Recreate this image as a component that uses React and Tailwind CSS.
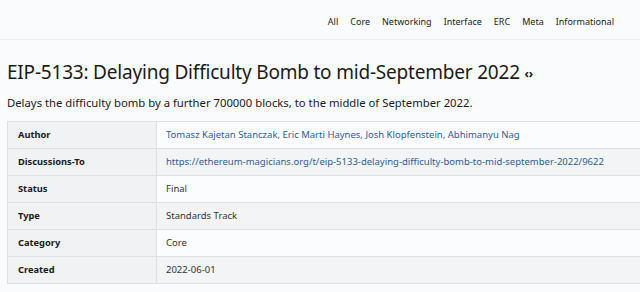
export default function App() {
  const rows = [
    ["Author", "Tomasz Kajetan Stanczak, Eric Marti Haynes, Josh Klopfenstein, Abhimanyu Nag", true],
    ["Discussions-To", "https://ethereum-magicians.org/t/eip-5133-delaying-difficulty-bomb-to-mid-september-2022/9622", true],
    ["Status", "Final", false],
    ["Type", "Standards Track", false],
    ["Category", "Core", false],
    ["Created", "2022-06-01", false],
  ];
  const nav = ["All", "Core", "Networking", "Interface", "ERC", "Meta", "Informational"];
  return (
    <div className="w-[640px] h-[292px] overflow-hidden bg-[#fafbfd] text-[#212529]" style={{ fontFamily: '"Noto Sans", "Open Sans", sans-serif' }}>
      <div className="h-[40px] border-b border-[#eceef1] flex items-center justify-end pt-[5px] pr-[26px] gap-[12px] text-[9px] text-[#222]">
        {nav.map((n) => (
          <span key={n}>{n}</span>
        ))}
      </div>
      <div className="pl-[7px]">
        <h1 className="mt-[19px] text-[19px] leading-[26px] text-[#1a1a1a] tracking-[-0.2px]">
          EIP-5133: Delaying Difficulty Bomb to mid-September 2022 <span className="text-[12px] font-bold align-[1px]">‹›</span>
        </h1>
        <p className="mt-[8px] text-[11.3px] leading-[16px] text-[#1a1a1a]">
          Delays the difficulty bomb by a further 700000 blocks, to the middle of September 2022.
        </p>
        <table className="mt-[10px] w-[650px] border-collapse text-[9.5px]">
          <tbody>
            {rows.map(([k, v, link], i) => (
              <tr key={k} className="h-[27px]">
                <th className="w-[149px] text-left font-bold pl-[10px] bg-[#f1f2f4] border border-[#dcdfe3] text-[#1a1a1a] text-[9.3px]">{k}</th>
                <td className={`pl-[9px] border border-[#dcdfe3] ${i % 2 === 1 ? "bg-[#f3f4f6]" : "bg-[#fbfcfe]"} ${link ? "text-[#2d5d9c]" : "text-[#333]"}`}>
                  {v}
                </td>
              </tr>
            ))}
          </tbody>
        </table>
      </div>
    </div>
  );
}
